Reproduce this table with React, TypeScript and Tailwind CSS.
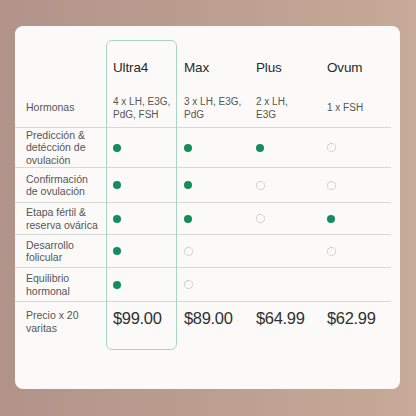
import React from "react";

type Cell = "f" | "e" | "n";

const rows: { label: string[]; h: string; cells: Cell[] }[] = [
  { label: ["Predicción &", "detécción de", "ovulación"], h: "h-[40px]", cells: ["f", "f", "f", "e"] },
  { label: ["Confirmación", "de ovulación"], h: "h-[35px]", cells: ["f", "f", "e", "e"] },
  { label: ["Etapa fértil &", "reserva ovárica"], h: "h-[32px]", cells: ["f", "f", "e", "f"] },
  { label: ["Desarrollo", "folicular"], h: "h-[33px]", cells: ["f", "e", "n", "e"] },
  { label: ["Equilibrio", "hormonal"], h: "h-[34px]", cells: ["f", "e", "n", "n"] },
];

const grid = "grid grid-cols-[91px_71px_71px_72px_71px]";

function Dot({ c }: { c: Cell }) {
  if (c === "f") return <div className="w-[8px] h-[8px] rounded-full bg-[#168b5d]" />;
  if (c === "e")
    return <div className="w-[9px] h-[9px] rounded-full border border-dotted border-[#aaaaaa]" />;
  return null;
}

const price = "pt-[6px] text-[16.5px] leading-[20px] text-[#303030] tracking-[-0.02em]";

export default function App() {
  return (
    <div
      className="w-[416px] h-[416px] pt-[26px] pl-[15px] bg-gradient-to-r from-[#b2938a] via-[#bc9e90] to-[#c8aa9a]"
      style={{ fontFamily: '"Liberation Sans", Arial, sans-serif' }}
    >
      <div className="w-[385px] h-[363px] bg-[#fcfaf9] rounded-[8px] pt-[14px] pr-[9px]">
        <div className="relative">
          <div className="absolute left-[91px] top-0 w-[71px] h-[310px] rounded-[6px] border border-[#a7d6c4] pointer-events-none" />
          <div className={`${grid} h-[48px] pt-[20px] text-[13.5px] leading-[16px] text-[#2a2a2a] tracking-[-0.01em]`}>
            <div />
            <div className="pl-[7px]">Ultra4</div>
            <div className="pl-[7px]">Max</div>
            <div className="pl-[8px]">Plus</div>
            <div className="pl-[7px]">Ovum</div>
          </div>
          <div className={`${grid} h-[39px] items-center text-[10px] leading-[13px] text-[#555555]`}>
            <div className="pl-[11px] text-[10.5px]">Hormonas</div>
            <div className="pl-[7px]">4 x LH, E3G,<br />PdG, FSH</div>
            <div className="pl-[7px]">3 x LH, E3G,<br />PdG</div>
            <div className="pl-[8px]">2 x LH,<br />E3G</div>
            <div className="pl-[7px]">1 x FSH</div>
          </div>
          {rows.map((r, i) => (
            <div key={i} className={`${grid} ${r.h} items-center border-t border-[#d6d9d7]`}>
              <div className="pl-[11px] text-[10.5px] leading-[12.5px] text-[#555555]">
                {r.label.map((l, j) => (
                  <div key={j}>{l}</div>
                ))}
              </div>
              {r.cells.map((c, j) => (
                <div key={j} className={j === 2 ? "pl-[8px]" : "pl-[7px]"}>
                  <Dot c={c} />
                </div>
              ))}
            </div>
          ))}
          <div className={`${grid} h-[88px] border-t border-[#d6d9d7]`}>
            <div className="pl-[11px] pt-[7px] text-[10.5px] leading-[12.5px] text-[#555555]">
              Precio x 20<br />varitas
            </div>
            <div className={`pl-[7px] ${price}`}>$99.00</div>
            <div className={`pl-[7px] ${price}`}>$89.00</div>
            <div className={`pl-[8px] ${price}`}>$64.99</div>
            <div className={`pl-[7px] ${price}`}>$62.99</div>
          </div>
        </div>
      </div>
    </div>
  );
}
